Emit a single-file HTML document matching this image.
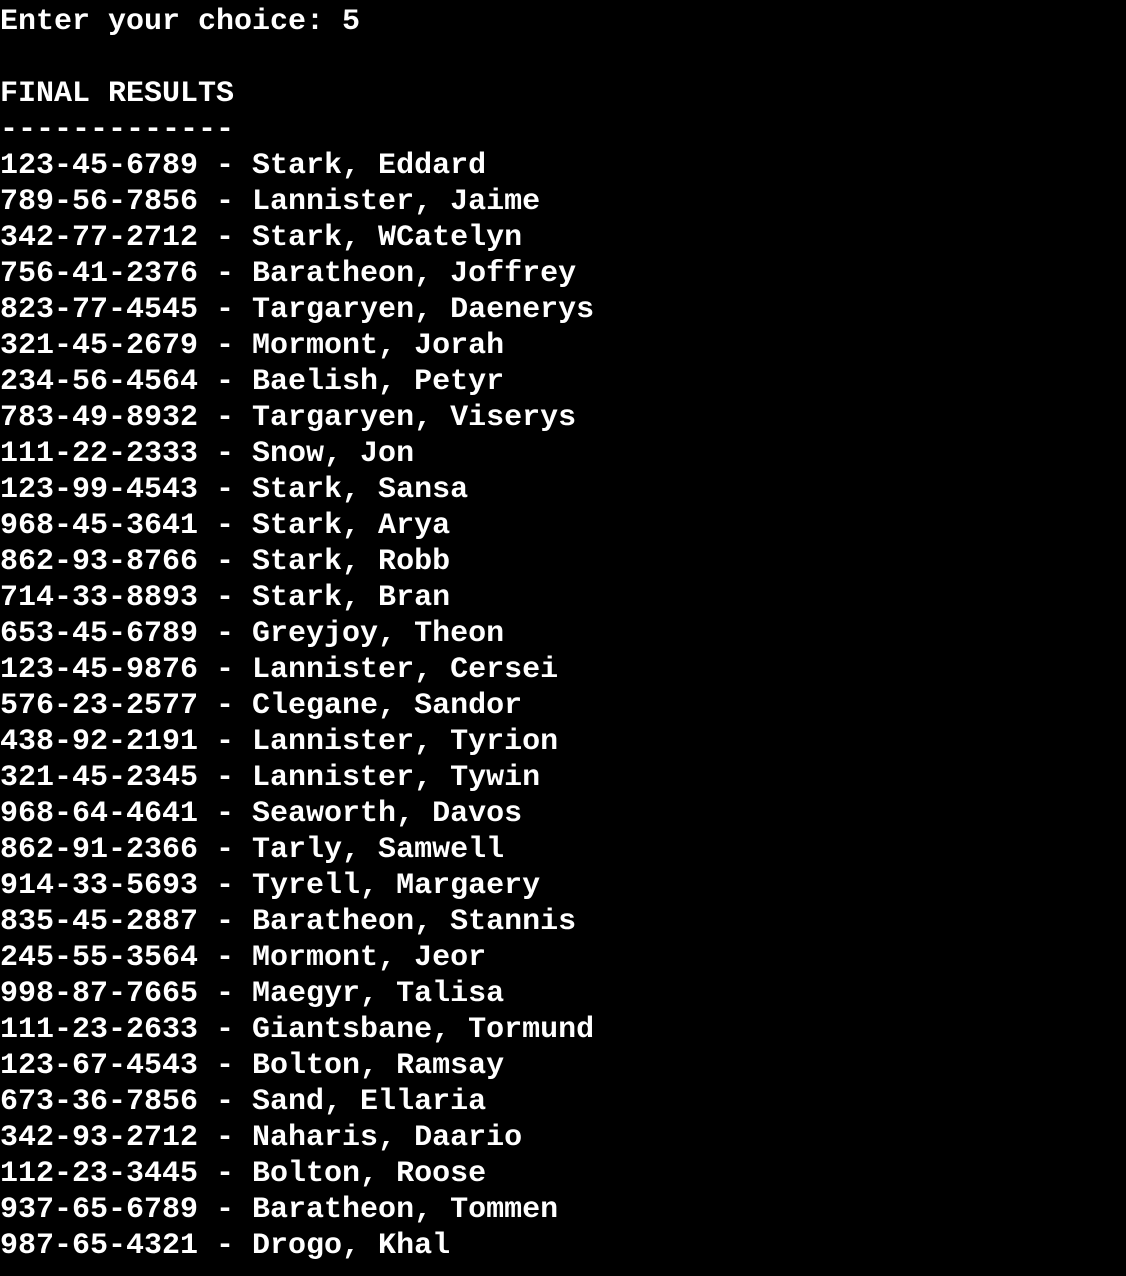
<!DOCTYPE html>
<html><head><meta charset="utf-8"><style>
html,body{margin:0;padding:0;background:#000;width:1126px;height:1276px;overflow:hidden}
pre{margin:0;padding:4px 0 0 0;color:#fff;font-family:"Liberation Mono",monospace;font-weight:bold;font-size:30px;line-height:36px;white-space:pre}
</style></head><body><pre>Enter your choice: 5

FINAL RESULTS
-------------
123-45-6789 - Stark, Eddard
789-56-7856 - Lannister, Jaime
342-77-2712 - Stark, WCatelyn
756-41-2376 - Baratheon, Joffrey
823-77-4545 - Targaryen, Daenerys
321-45-2679 - Mormont, Jorah
234-56-4564 - Baelish, Petyr
783-49-8932 - Targaryen, Viserys
111-22-2333 - Snow, Jon
123-99-4543 - Stark, Sansa
968-45-3641 - Stark, Arya
862-93-8766 - Stark, Robb
714-33-8893 - Stark, Bran
653-45-6789 - Greyjoy, Theon
123-45-9876 - Lannister, Cersei
576-23-2577 - Clegane, Sandor
438-92-2191 - Lannister, Tyrion
321-45-2345 - Lannister, Tywin
968-64-4641 - Seaworth, Davos
862-91-2366 - Tarly, Samwell
914-33-5693 - Tyrell, Margaery
835-45-2887 - Baratheon, Stannis
245-55-3564 - Mormont, Jeor
998-87-7665 - Maegyr, Talisa
111-23-2633 - Giantsbane, Tormund
123-67-4543 - Bolton, Ramsay
673-36-7856 - Sand, Ellaria
342-93-2712 - Naharis, Daario
112-23-3445 - Bolton, Roose
937-65-6789 - Baratheon, Tommen
987-65-4321 - Drogo, Khal</pre></body></html>
